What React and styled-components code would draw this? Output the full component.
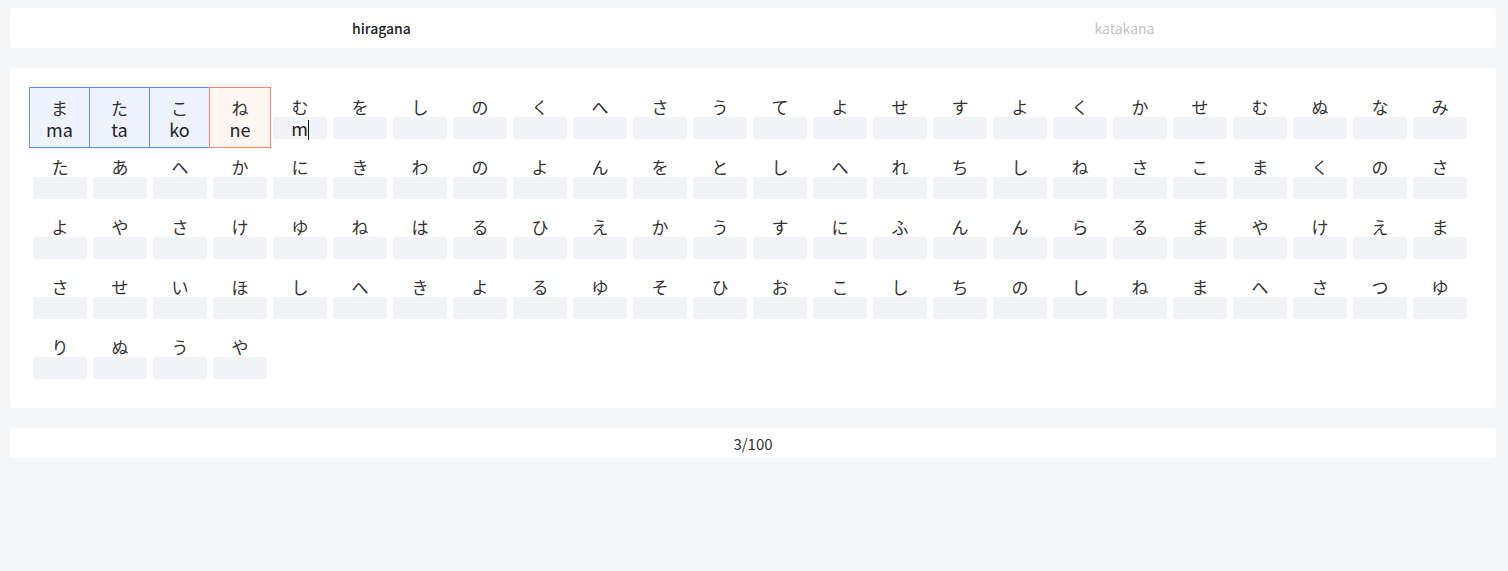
import React from 'react';
import styled, { createGlobalStyle } from 'styled-components';

const GlobalStyle = createGlobalStyle`
  body {
    margin: 0;
    background: #f4f6f8;
    font-family: "Noto Sans CJK JP", "Noto Sans", sans-serif;
    color: #333;
  }
`;

const Page = styled.div`
  padding: 8px 12px 0 10px;
  display: flex;
  flex-direction: column;
  gap: 20px;
`;

const Tabs = styled.div`
  display: flex;
  height: 40px;
  background: #fff;
  border-radius: 4px;
`;

const Tab = styled.div`
  flex: 1;
  display: flex;
  align-items: center;
  justify-content: center;
  font-size: 14px;
  font-weight: ${p => (p.$active ? 500 : 400)};
  color: ${p => (p.$active ? '#222' : '#c4c4c4')};
`;

const Board = styled.div`
  background: #fff;
  border-radius: 4px;
  padding: 20px;
`;

const Grid = styled.div`
  display: grid;
  grid-template-columns: repeat(24, 60px);
  grid-auto-rows: 60px;
`;

const colors = {
  ok: { border: '#5a8ef0', bg: '#eef4ff' },
  bad: { border: '#f5876a', bg: '#fff5f1' },
};

const Cell = styled.div`
  position: relative;
  display: flex;
  flex-direction: column;
  align-items: center;
  padding-top: 9px;
  box-sizing: border-box;
  ${p =>
    p.$state &&
    `
    margin: -1px 0 0 -1px;
    width: ${p.$state === 'bad' ? 62 : 61}px;
    height: 61px;
    padding-top: 10px;
    border: 1px solid ${colors[p.$state].border};
    background: ${colors[p.$state].bg};
    z-index: ${p.$state === 'bad' ? 2 : 1};
  `}
`;

const Kana = styled.div`
  font-size: 17px;
  line-height: 20px;
  height: 20px;
  color: #333;
`;

const Answer = styled.div`
  width: 54px;
  height: 22px;
  border-radius: 3px;
  background: ${p => (p.$filled ? 'transparent' : '#f2f4f7')};
  font-size: 18px;
  line-height: 22px;
  text-align: center;
  color: #222;
`;

const Caret = styled.span`
  display: inline-block;
  width: 1px;
  height: 20px;
  background: #111;
  vertical-align: -4px;
`;

const Footer = styled.div`
  height: 30px;
  background: #fff;
  border-radius: 4px;
  display: flex;
  align-items: center;
  justify-content: center;
  font-size: 15px;
  color: #333;
`;

const kana = [
  'ま た こ ね む を し の く へ さ う て よ せ す よ く か せ む ぬ な み',
  'た あ へ か に き わ の よ ん を と し へ れ ち し ね さ こ ま く の さ',
  'よ や さ け ゆ ね は る ひ え か う す に ふ ん ん ら る ま や け え ま',
  'さ せ い ほ し へ き よ る ゆ そ ひ お こ し ち の し ね ま へ さ つ ゆ',
  'り ぬ う や',
].join(' ').split(' ');

const answers = [
  { text: 'ma', state: 'ok' },
  { text: 'ta', state: 'ok' },
  { text: 'ko', state: 'ok' },
  { text: 'ne', state: 'bad' },
  { text: 'm', caret: true },
];

export default function App() {
  return (
    <>
      <GlobalStyle />
      <Page>
        <Tabs>
          <Tab $active>hiragana</Tab>
          <Tab>katakana</Tab>
        </Tabs>
        <Board>
          <Grid>
            {kana.map((k, i) => {
              const a = answers[i];
              return (
                <Cell key={i} $state={a && a.state}>
                  <Kana>{k}</Kana>
                  <Answer $filled={a && a.state}>
                    {a ? a.text : ''}
                    {a && a.caret && <Caret />}
                  </Answer>
                </Cell>
              );
            })}
          </Grid>
        </Board>
        <Footer>3/100</Footer>
      </Page>
    </>
  );
}
